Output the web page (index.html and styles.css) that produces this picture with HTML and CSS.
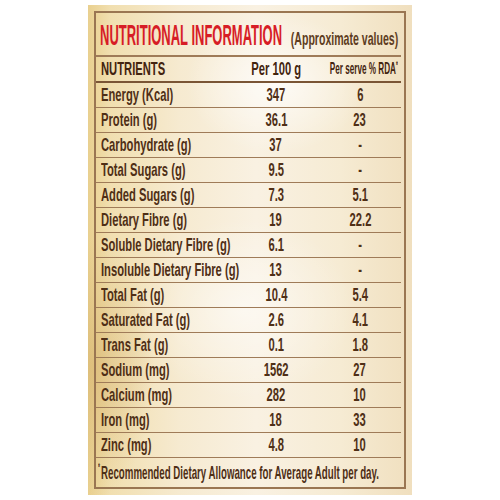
FILE: index.html
```html
<!DOCTYPE html>
<html lang="en">
<head>
    <meta charset="UTF-8">
    <meta name="viewport" content="width=device-width, initial-scale=1.0">
    <title>Nutritional Information</title>
    <link rel="stylesheet" href="styles.css">
</head>
<body>
    <div class="label">
        <div class="label-inner">
            <div class="title">
                <div class="title-main"><span>NUTRITIONAL INFORMATION</span></div>
                <div class="title-note"><span>(Approximate values)</span></div>
            </div>

            <div class="row head">
                <div class="cell name"><span>NUTRIENTS</span></div>
                <div class="cell per100"><span>Per 100 g</span></div>
                <div class="cell rda"><span>Per serve % RDA<sup>*</sup></span></div>
            </div>

            <div class="row">
                <div class="cell name"><span>Energy (Kcal)</span></div>
                <div class="cell per100"><span>347</span></div>
                <div class="cell rda"><span>6</span></div>
            </div>
            <div class="row">
                <div class="cell name"><span>Protein (g)</span></div>
                <div class="cell per100"><span>36.1</span></div>
                <div class="cell rda"><span>23</span></div>
            </div>
            <div class="row">
                <div class="cell name"><span>Carbohydrate (g)</span></div>
                <div class="cell per100"><span>37</span></div>
                <div class="cell rda"><span>-</span></div>
            </div>
            <div class="row">
                <div class="cell name"><span>Total Sugars (g)</span></div>
                <div class="cell per100"><span>9.5</span></div>
                <div class="cell rda"><span>-</span></div>
            </div>
            <div class="row">
                <div class="cell name"><span>Added Sugars (g)</span></div>
                <div class="cell per100"><span>7.3</span></div>
                <div class="cell rda"><span>5.1</span></div>
            </div>
            <div class="row">
                <div class="cell name"><span>Dietary Fibre (g)</span></div>
                <div class="cell per100"><span>19</span></div>
                <div class="cell rda"><span>22.2</span></div>
            </div>
            <div class="row">
                <div class="cell name"><span>Soluble Dietary Fibre (g)</span></div>
                <div class="cell per100"><span>6.1</span></div>
                <div class="cell rda"><span>-</span></div>
            </div>
            <div class="row">
                <div class="cell name"><span>Insoluble Dietary Fibre (g)</span></div>
                <div class="cell per100"><span>13</span></div>
                <div class="cell rda"><span>-</span></div>
            </div>
            <div class="row">
                <div class="cell name"><span>Total Fat (g)</span></div>
                <div class="cell per100"><span>10.4</span></div>
                <div class="cell rda"><span>5.4</span></div>
            </div>
            <div class="row">
                <div class="cell name"><span>Saturated Fat (g)</span></div>
                <div class="cell per100"><span>2.6</span></div>
                <div class="cell rda"><span>4.1</span></div>
            </div>
            <div class="row">
                <div class="cell name"><span>Trans Fat (g)</span></div>
                <div class="cell per100"><span>0.1</span></div>
                <div class="cell rda"><span>1.8</span></div>
            </div>
            <div class="row">
                <div class="cell name"><span>Sodium (mg)</span></div>
                <div class="cell per100"><span>1562</span></div>
                <div class="cell rda"><span>27</span></div>
            </div>
            <div class="row">
                <div class="cell name"><span>Calcium (mg)</span></div>
                <div class="cell per100"><span>282</span></div>
                <div class="cell rda"><span>10</span></div>
            </div>
            <div class="row">
                <div class="cell name"><span>Iron (mg)</span></div>
                <div class="cell per100"><span>18</span></div>
                <div class="cell rda"><span>33</span></div>
            </div>
            <div class="row">
                <div class="cell name"><span>Zinc (mg)</span></div>
                <div class="cell per100"><span>4.8</span></div>
                <div class="cell rda"><span>10</span></div>
            </div>

            <div class="footnote"><span><sup>*</sup>Recommended Dietary Allowance for Average Adult per day.</span></div>
        </div>
    </div>
</body>
</html>
```

FILE: styles.css
```css
:root {
    --text: #4f2f16;
    --text-dark: #43240f;
    --red: #d71d26;
    --line: #9f7b58;
    --line-dark: #7a5535;
}

body {
    margin: 0;
    background: #ffffff;
    font-family: "Liberation Sans", Arial, sans-serif;
    font-weight: bold;
    color: var(--text);
}

.label {
    width: 324px;
    height: 490px;
    margin: 5px auto 0;
    padding: 6px;
    box-sizing: border-box;
    background:
        radial-gradient(ellipse 90px 70px at 58% 16%, rgba(255, 255, 255, 0.75), rgba(255, 255, 255, 0)),
        radial-gradient(ellipse 110px 90px at 48% 62%, rgba(255, 255, 255, 0.55), rgba(255, 255, 255, 0)),
        radial-gradient(ellipse 60px 130px at 2% 74%, rgba(210, 172, 100, 0.5), rgba(210, 172, 100, 0)),
        linear-gradient(90deg, #e9d08f 0%, #f1dfb0 7%, #f6ead0 28%, #f9f1e2 52%, #f6ebd3 78%, #f0dfbe 100%);
}

.label-inner {
    height: 100%;
    box-sizing: border-box;
    border: 2px solid #9a7652;
    padding-right: 3px;
    display: flex;
    flex-direction: column;
}

/* every text piece is condensed horizontally */
.title span,
.cell span,
.footnote span {
    display: inline-block;
    white-space: nowrap;
}

.title {
    height: 36px;
    padding: 8px 3px 0 4px;
    border-bottom: 2px solid var(--line);
    display: flex;
    align-items: baseline;
}

.title-main,
.title-note {
    flex: 1 1 0;
    min-width: 0;
    display: flex;
}

.title-main span {
    font-size: 29px;
    line-height: 28px;
    color: var(--red);
    transform: scaleX(0.448);
    transform-origin: left center;
}

.title-note {
    justify-content: flex-end;
}

.title-note span {
    font-size: 19px;
    line-height: 28px;
    color: #5e3d22;
    transform: scaleX(0.556);
    transform-origin: right center;
}

.row {
    display: grid;
    grid-template-columns: 145px 70px minmax(0, 1fr);
    height: 24px;
    border-bottom: 1px solid var(--line);
}

.row.head {
    border-bottom: 2px solid var(--line-dark);
    color: var(--text-dark);
}

.cell {
    min-width: 0;
    display: flex;
    align-items: center;
    font-size: 19px;
    line-height: 24px;
}

.cell span {
    flex: none;
    transform: scaleX(0.59);
}

.name {
    padding-left: 5px;
}

.name span {
    transform-origin: left center;
}

.per100,
.rda {
    justify-content: center;
}

.rda {
    padding-left: 8px;
}

.per100 span,
.rda span {
    transform-origin: center center;
}

.head .rda {
    justify-content: flex-end;
    padding-right: 3px;
}

.head .rda span {
    font-size: 17px;
    transform: scaleX(0.48);
    transform-origin: right center;
}

sup {
    font-size: 10px;
    vertical-align: top;
    line-height: 1;
    position: relative;
    top: 4px;
}

.footnote {
    height: 29px;
    padding-left: 2px;
    display: flex;
    align-items: center;
    font-size: 19px;
    line-height: 29px;
}

.footnote span {
    transform: scaleX(0.511);
    transform-origin: left center;
}

.footnote sup {
    top: 5px;
    margin-right: 2px;
}
```
